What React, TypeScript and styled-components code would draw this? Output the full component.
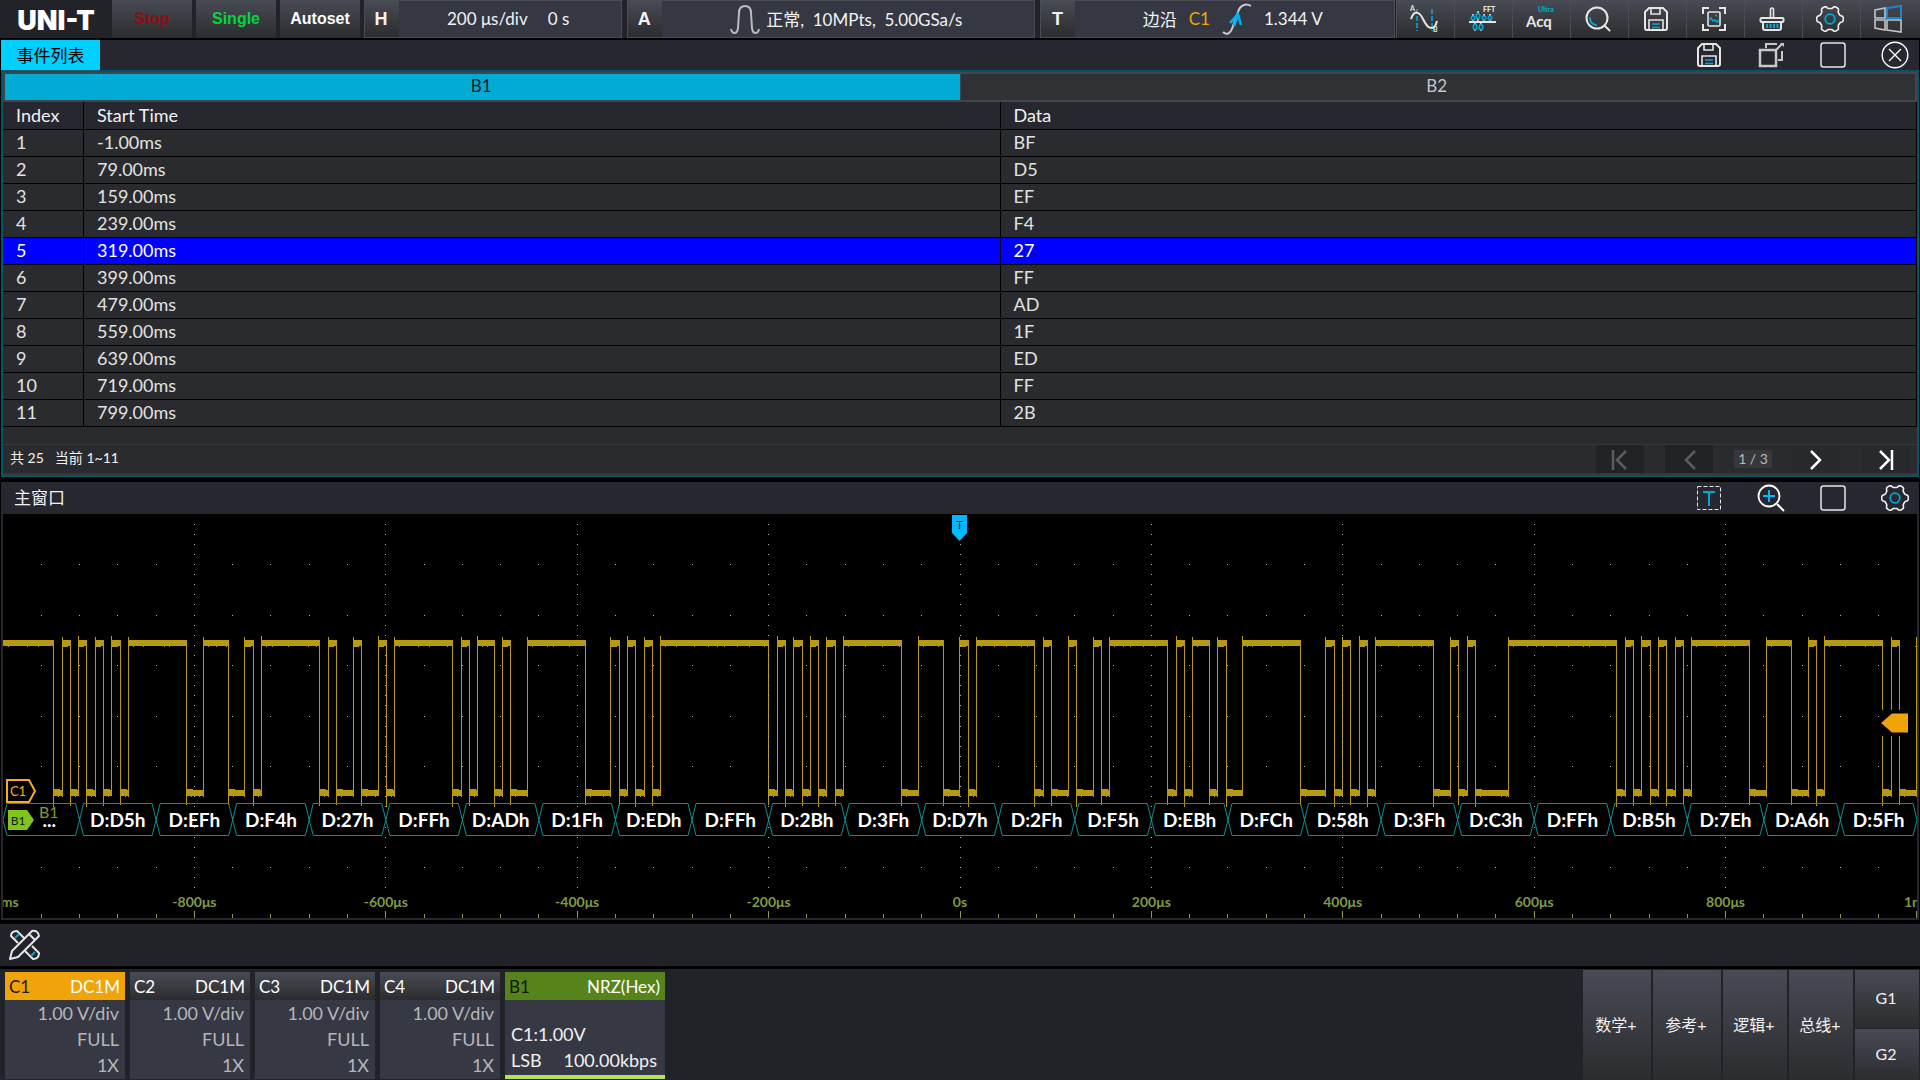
import React from 'react';
import styled, { createGlobalStyle } from 'styled-components';

const latin = 'Lato, "Noto Sans CJK SC", sans-serif';
const heavy = '"Liberation Sans", "Noto Sans CJK SC", sans-serif';
const bevel = 'linear-gradient(#484b54, #2b2c2e)';

const Global = createGlobalStyle`
  * { box-sizing: border-box; }
  body { margin: 0; background: #000; color: #f2f2f2; font-family: ${latin}; font-size: 17px; }
  button { font: inherit; color: inherit; border: 0; padding: 0; margin: 0; background: none; cursor: pointer; }
  svg { display: block; }
`;

const Screen = styled.div`
  display: flex;
  flex-direction: column;
  min-height: 100vh;
`;

/* ---------- top bar ---------- */

const TopBar = styled.header`
  display: flex;
  height: 38px;
  background: #222329;
`;

const Logo = styled.div`
  width: 112px;
  flex: none;
  display: flex;
  align-items: center;
  justify-content: center;
  padding-top: 3px;
  font: 900 27px Inter, sans-serif;
  color: #fff;
`;

const RunButton = styled.button<{ $color: string }>`
  width: 80px;
  flex: none;
  margin-right: 4px;
  background: ${bevel};
  color: ${(p) => p.$color};
  font: bold 16px ${heavy};
`;

const Group = styled.section<{ $grow: number }>`
  display: flex;
  flex: ${(p) => p.$grow} 1 0;
  margin-right: 5px;
  border: 1px solid #4a4c53;
  background: #353843;
`;

const GroupKey = styled.button`
  width: 34px;
  flex: none;
  padding-right: 2px;
  background: ${bevel};
  font: bold 18px ${heavy};
`;

const GroupInfo = styled.div<{ $gap: number }>`
  flex: 1;
  display: flex;
  align-items: center;
  justify-content: center;
  gap: ${(p) => p.$gap}px;
  padding: 0 4px 1px 0;
  font-size: 17px;
  white-space: pre;
`;

const Source = styled.span`
  color: #f0a40a;
`;

const Tools = styled.nav`
  display: flex;
  flex: none;
  margin-left: -4px;
  padding-right: 2px;
  background: ${bevel};
`;

const Tool = styled.button`
  width: 58px;
  height: 38px;
  display: flex;
  align-items: center;
  justify-content: center;
  padding-right: 4px;
  border-left: 1px solid #4a4c53;
`;

/* ---------- window frames ---------- */

const Window = styled.section<{ $gap: number }>`
  margin: ${(p) => p.$gap}px 1px 0;
  background: #26272f;
`;

const TitleBar = styled.div<{ $height: number }>`
  display: flex;
  justify-content: space-between;
  height: ${(p) => p.$height}px;
`;

const ActiveTitle = styled.h2`
  margin: 0;
  width: 99px;
  display: flex;
  align-items: center;
  justify-content: center;
  padding-bottom: 2px;
  background: #00d0ff;
  color: #000;
  font-size: 17px;
  font-weight: 400;
`;

const Title = styled.h2`
  margin: 0;
  padding: 0 0 3px 13px;
  display: flex;
  align-items: center;
  font-size: 17px;
  font-weight: 400;
`;

const TitleTools = styled.div`
  display: flex;
  gap: 12px;
`;

const TitleTool = styled.button`
  width: 50px;
  display: flex;
  align-items: center;
  justify-content: center;
  padding-left: 2px;
`;

/* ---------- event list ---------- */

const EventBody = styled.div`
  border: 2px solid #03566a;
  background: #2a2b2e;
`;

const Tabs = styled.div`
  display: flex;
  gap: 1px;
  border: 2px solid #43454b;
  background: #43454b;
`;

const Tab = styled.button<{ $on?: boolean }>`
  flex: 1;
  height: 26px;
  padding: 0 2px 3px 0;
  background: ${(p) => (p.$on ? '#02abd3' : '#303135')};
  color: ${(p) => (p.$on ? '#10161a' : '#c4c4c8')};
`;

const Table = styled.table`
  width: 100%;
  table-layout: fixed;
  border-collapse: separate;
  border-spacing: 0;
  font-size: 18px;
  line-height: 24px;
`;

const HeadCell = styled.th<{ $width?: number }>`
  width: ${(p) => (p.$width ? `${p.$width}px` : 'auto')};
  height: 28px;
  padding: 0 0 2px 13px;
  background: #26272f;
  border: solid #000;
  border-width: 0 1px 1px 0;
  font-weight: 400;
  text-align: left;
`;

const Cell = styled.td`
  height: 27px;
  padding: 0 0 2px 13px;
  border: solid #000;
  border-width: 0 1px 1px 0;
`;

const EventRow = styled.tr<{ $on: boolean }>`
  background: ${(p) => (p.$on ? '#0000ff' : '#2a2b2e')};
  color: ${(p) => (p.$on ? '#ffffff' : '#e2e2e2')};
`;

const Footer = styled.footer`
  display: flex;
  justify-content: space-between;
  align-items: center;
  height: 31px;
  margin-top: 17px;
  padding: 0 7px;
  border-top: 1px solid #36373b;
  border-bottom: 2px solid #36373b;
`;

const Count = styled.p`
  margin: 0;
  display: flex;
  gap: 11px;
  font-size: 14px;
  padding-bottom: 5px;
`;

const Pager = styled.nav`
  display: grid;
  grid-template-columns: 48px 48px 38px 48px 48px;
  gap: 21px;
  align-items: center;
`;

const PageButton = styled.button`
  height: 28px;
  display: flex;
  align-items: center;
  justify-content: center;
  padding-top: 2px;
  background: #28292c;
  color: #fff;
  &:disabled { background: #222327; color: #5c5d60; }
`;

const PageLabel = styled.span`
  height: 18px;
  background: #37383c;
  color: #b8b8b8;
  font-size: 14px;
  line-height: 18px;
  text-align: center;
  white-space: nowrap;
`;

/* ---------- scope ---------- */

const Plot = styled.div`
  position: relative;
  height: 406px;
  border: solid #26272f;
  border-width: 0 2px 2px;
  background: #000;
  overflow: hidden;
`;

const Layer = styled.svg`
  width: 100%;
  height: 404px;
`;

const BusRow = styled.div`
  position: absolute;
  left: 0;
  right: 0;
  top: 289px;
  height: 33px;
  display: grid;
  grid-template-columns: repeat(25, minmax(0, 1fr));
`;

const BusWord = styled.span<{ $inset?: number }>`
  padding-left: ${(p) => p.$inset ?? 0}px;
  text-align: center;
  color: #fff;
  font-size: 19px;
  font-weight: 700;
  line-height: 33px;
  white-space: nowrap;
`;

const BusName = styled.span`
  position: absolute;
  left: 36px;
  top: 288px;
  color: #7f9a35;
  font-size: 16px;
  line-height: 20px;
`;

const Axis = styled.div`
  position: absolute;
  left: -5%;
  right: -5%;
  top: 378px;
  display: flex;
`;

const AxisLabel = styled.span`
  flex: 1 1 0;
  text-align: center;
  color: #7f9a40;
  font-size: 14px;
  font-weight: 700;
  line-height: 20px;
`;

const TriggerTime = styled.svg`
  position: absolute;
  left: calc(50% - 8px);
  top: 1px;
`;

const TriggerLevel = styled.svg`
  position: absolute;
  right: 5px;
  top: 196px;
`;

const ChannelMark = styled.svg`
  position: absolute;
  left: 2px;
  top: 264px;
`;

const BusMark = styled.svg`
  position: absolute;
  left: 4px;
  top: 296px;
`;

/* ---------- bottom ---------- */

const Strip = styled.div`
  display: flex;
  align-items: center;
  height: 42px;
  margin-top: 4px;
  padding-left: 8px;
  background: #222329;
`;

const Dock = styled.footer`
  flex: 1;
  min-height: 111px;
  margin-top: 3px;
  padding: 3px 1px 0 5px;
  display: flex;
  justify-content: space-between;
  background: #222329;
`;

const Cards = styled.div`
  display: flex;
  gap: 5px;
`;

const Card = styled.section<{ $width: number; $accent?: string }>`
  width: ${(p) => p.$width}px;
  height: 107px;
  background: #363944;
  border-bottom: ${(p) => (p.$accent ? `4px solid ${p.$accent}` : '0')};
  font-size: 18px;
  line-height: 26px;
`;

const CardHead = styled.header<{ $bg: string; $key: string }>`
  display: flex;
  justify-content: space-between;
  height: 28px;
  padding: 0 5px 0 4px;
  font-size: 17px;
  line-height: 29px;
  background: ${(p) => p.$bg};
  color: #fff;
  & > :first-child { color: ${(p) => p.$key}; }
`;

const CardLines = styled.div`
  padding-right: 6px;
  color: #b5b6ba;
  text-align: right;
`;

const BusLines = styled.div`
  padding: 21px 8px 0 6px;
`;

const BusLine = styled.div`
  display: flex;
  justify-content: space-between;
`;

const Adders = styled.nav`
  display: grid;
  grid-template-columns: 68px 68px 64px 64px 64px;
  grid-template-rows: 58px 1fr;
  gap: 1px 2px;
  margin-top: -2px;
`;

const Adder = styled.button<{ $tall?: boolean }>`
  grid-row: ${(p) => (p.$tall ? '1 / 3' : 'auto')};
  padding: 0 2px 3px 0;
  background: ${bevel};
  font-size: 16px;
`;

/* ---------- icons ---------- */

const W = '#e6e6e6';
const B = '#00a8d8';

const CursorIcon = () => (
  <svg width="28" height="28" viewBox="0 0 28 28" fill="none" strokeWidth="2">
    <path d="M7 4v22M22 4v22" stroke={B} strokeDasharray="5 2" strokeWidth="1.6" />
    <path d="M1 14C4 5 9 6 13 14s6 9 9 9c3 0 4-3 5-7" stroke={W} />
    <text x="0" y="6" fontSize="7" fontWeight="700" fill={W}>A</text>
    <text x="23" y="27" fontSize="7" fontWeight="700" fill={W}>B</text>
  </svg>
);

const FftIcon = () => (
  <svg width="28" height="28" viewBox="0 0 28 28" fill="none" strokeWidth="1.5">
    <path d="M5 9v7M10 6v10M16 9v7M22 9v7M7 17v9M13 17v9" stroke={W} />
    <path d="M1 17h27" stroke={W} strokeWidth="2" />
    <g stroke={B} fill="#3a3c42">
      <circle cx="5" cy="13" r="1.8" /><ellipse cx="10" cy="11" rx="1.8" ry="2.6" />
      <circle cx="16" cy="13" r="1.8" /><circle cx="22" cy="13" r="1.8" />
      <ellipse cx="7" cy="22" rx="1.8" ry="2.6" /><ellipse cx="13" cy="22" rx="1.8" ry="2.6" />
    </g>
    <text x="15" y="7" fontSize="7" fontWeight="900" fill={W}>FFT</text>
  </svg>
);

const AcqIcon = () => (
  <svg width="30" height="30" viewBox="0 0 30 30">
    <text x="13" y="8" fontSize="7" fontWeight="900" fill={B}>Ultra</text>
    <text x="1" y="23" fontSize="15" fontWeight="700" fill={W}>Acq</text>
  </svg>
);

const SearchIcon = () => (
  <svg width="26" height="26" viewBox="0 0 26 26" fill="none" strokeWidth="2" strokeLinecap="round">
    <circle cx="12" cy="12" r="10.5" stroke={W} />
    <path d="M19.5 19.5l5 5" stroke={W} />
    <path d="M5 12a7 7 0 0 0 6 7" stroke={B} />
  </svg>
);

const SaveIcon = () => (
  <svg width="26" height="26" viewBox="0 0 26 26" fill="none" stroke={W} strokeWidth="2">
    <path d="M6 2h14l4 4v16a2 2 0 0 1-2 2H4a2 2 0 0 1-2-2V6z" strokeLinejoin="round" />
    <path d="M8 2v6h9V2M6 24V14h14v10" strokeWidth="1.6" />
    <path d="M9 18h8M9 21.500h8" stroke={B} strokeWidth="1.6" />
  </svg>
);

const CaptureIcon = () => (
  <svg width="26" height="26" viewBox="0 0 26 26" fill="none" stroke={W} strokeWidth="2">
    <path d="M2 8V2h6M18 2h6v6M24 18v6h-6M8 24H2v-6" />
    <rect x="7" y="6" width="12" height="14" rx="1" strokeWidth="1.6" />
    <path d="M8 14l2-2 2 3 2-1 2 2 2-2" stroke={B} strokeWidth="1.6" />
    <circle cx="15" cy="9.500" r="1" fill={B} stroke="none" />
  </svg>
);

const BrushIcon = () => (
  <svg width="26" height="26" viewBox="0 0 26 26" fill="none" stroke={W} strokeWidth="2">
    <path d="M11.500 12V3q1.500-2 3 0v9" strokeWidth="1.6" />
    <rect x="1.500" y="12" width="23" height="4" rx="1" />
    <path d="M4 16v6q0 2 2 2h14q2 0 2-2v-6" />
    <path d="M8 18v4M11.500 18v4M15 18v4M18.500 18v4" stroke={B} />
  </svg>
);

// Six rounded teeth, one pointing right, with a dip at the top and bottom.
const gearOutline = Array.from({ length: 120 }, (_, i) => {
  const a = (i / 120) * Math.PI * 2;
  const r = 11.9 + 1.5 * Math.tanh(2 * Math.cos(6 * a));
  return `${(14 + r * Math.cos(a)).toFixed(2)},${(14 + r * Math.sin(a)).toFixed(2)}`;
}).join(' ');

const GearIcon = () => (
  <svg width="28" height="28" viewBox="0 0 28 28" fill="none" strokeWidth="1.8" strokeLinejoin="round">
    <polygon points={gearOutline} stroke="#f0f0f0" strokeWidth="1.6" />
    <circle cx="14" cy="14" r="4.800" stroke={B} />
  </svg>
);

const WindowsIcon = () => (
  <svg width="28" height="28" viewBox="0 0 28 28" fill="none" stroke="#c4c4c4" strokeWidth="1.6">
    <path d="M1 5l10-2v10H1zM1 15h10v10L1 23zM13 15h14v12l-14-2z" />
    <path d="M13 3l14-2v12H13z" stroke="#1d86cf" strokeWidth="2" />
  </svg>
);

const DetachIcon = () => (
  <svg width="26" height="26" viewBox="0 0 26 26" fill="none" stroke="#c8c8c8">
    <rect x="2" y="8" width="16" height="16" strokeWidth="2.500" />
    <path d="M8 6V2h11M20 18h4V9M18 8l6-6" strokeWidth="2" />
    <path d="M22 1h4v4z" fill="#c8c8c8" stroke="none" />
  </svg>
);

const SquareIcon = () => (
  <svg width="26" height="26" viewBox="0 0 26 26" fill="none">
    <rect x="1" y="1" width="24" height="24" rx="2.500" stroke={W} strokeWidth="1.5" />
  </svg>
);

const CloseIcon = () => (
  <svg width="28" height="28" viewBox="0 0 28 28" fill="none" stroke="#fff" strokeWidth="1.4">
    <circle cx="14" cy="14" r="12.800" />
    <path d="M8 8l12 12M20 8L8 20" />
  </svg>
);

const TextBoxIcon = () => (
  <svg width="24" height="24" viewBox="0 0 24 24" fill="none">
    <rect x="0.500" y="0.500" width="23" height="23" stroke={W} strokeDasharray="4 2" />
    <path d="M6 6h12M12 6v14" stroke={B} strokeWidth="2" />
  </svg>
);

const ZoomInIcon = () => (
  <svg width="28" height="28" viewBox="0 0 28 28" fill="none" strokeWidth="1.8">
    <circle cx="12" cy="12" r="10.500" stroke="#fff" />
    <path d="M20 20l7 7" stroke="#fff" strokeWidth="2" />
    <path d="M6 12h12M12 6v12" stroke="#00b8ff" strokeWidth="2" />
  </svg>
);

const PulseIcon = () => (
  <svg width="30" height="32" viewBox="0 0 30 32" fill="none" stroke="#b8babf" strokeWidth="2">
    <path d="M1 26c1 5 6 6 7-1l1-15c0-6 3-7 6-7s6 1 6 7l1 15c1 7 6 6 7 1" />
  </svg>
);

const EdgeIcon = () => (
  <svg width="30" height="34" viewBox="0 0 30 34" fill="none" strokeWidth="2">
    <path d="M1 30c4 4 8 1 10-6l5-14c2-7 8-9 13-6" stroke="#c8cacf" />
    <path d="M8 21l8-9 3 11" stroke="#00b0f0" strokeWidth="2.500" />
    <path d="M12 24l4-11" stroke="#00b0f0" strokeWidth="2.500" />
  </svg>
);

const PenRulerIcon = () => (
  <svg width="34" height="32" viewBox="0 0 34 32" fill="none" strokeWidth="2" stroke={W} strokeLinejoin="round">
    <path d="M10 14L3 7Q3 2 9 2l8 8M24 17l7 7q0 6-6 6l-8-8" />
    <path d="M24 2q6-1 7 5L10 28l-8 2 2-8zM21 5l6 6" />
    <path d="M7 9l4-4M23 27l4-4" stroke={B} />
  </svg>
);

const Chevron = ({ back, bar }: { back?: boolean; bar?: boolean }) => (
  <svg width="18" height="20" viewBox="0 0 18 20" fill="none" stroke="currentColor" strokeWidth="2.500">
    <path d={back ? 'M15 1L6 10l9 9' : 'M3 1l9 9-9 9'} />
    {bar && <path d={back ? 'M2 0v20' : 'M15 0v20'} />}
  </svg>
);

/* ---------- data ---------- */

const events: [string, string][] = [
  ['-1.00ms', 'BF'], ['79.00ms', 'D5'], ['159.00ms', 'EF'], ['239.00ms', 'F4'],
  ['319.00ms', '27'], ['399.00ms', 'FF'], ['479.00ms', 'AD'], ['559.00ms', '1F'],
  ['639.00ms', 'ED'], ['719.00ms', 'FF'], ['799.00ms', '2B'],
];

const words = [
  'D5', 'EF', 'F4', '27', 'FF', 'AD', '1F', 'ED', 'FF', '2B', '3F', 'D7',
  '2F', 'F5', 'EB', 'FC', '58', '3F', 'C3', 'FF', 'B5', '7E', 'A6', '5F',
];

const ticks = ['-1ms', '-800μs', '-600μs', '-400μs', '-200μs', '0s', '200μs', '400μs', '600μs', '800μs', '1ms'];

const tools: [string, () => React.JSX.Element][] = [
  ['光标', CursorIcon], ['FFT', FftIcon], ['Ultra Acq', AcqIcon], ['搜索', SearchIcon], ['保存', SaveIcon],
  ['截图', CaptureIcon], ['清除', BrushIcon], ['设置', GearIcon], ['系统', WindowsIcon],
];

// Level changes of C1 in plot units; the trace starts high, so even entries fall.
const edges = [
  50, 59, 67, 75, 83, 92, 100, 108, 117, 125, 183, 200, 225, 241, 250, 258, 316, 325, 333, 350, 358, 375,
  383, 391, 449, 458, 466, 474, 491, 499, 507, 524, 582, 607, 616, 624, 632, 641, 649, 657, 765, 774, 782,
  790, 799, 807, 815, 823, 832, 840, 898, 915, 940, 956, 965, 973, 1031, 1040, 1048, 1065, 1073, 1090, 1098,
  1106, 1164, 1173, 1181, 1189, 1206, 1214, 1223, 1239, 1297, 1322, 1331, 1339, 1347, 1356, 1364, 1372, 1430,
  1447, 1455, 1464, 1472, 1505, 1613, 1622, 1630, 1638, 1647, 1655, 1663, 1672, 1680, 1688, 1746, 1763, 1788,
  1805, 1813, 1821, 1879, 1888, 1896, 1913,
];

const WIDTH = 1914;

const wavePath = () => {
  let d = '';
  const bar = (x: number, y: number, w: number, h: number) => {
    d += `M${x} ${y}h${w}v${h}h${-w}z`;
  };
  const stops = [0, ...edges, WIDTH];
  for (let i = 0; i + 1 < stops.length; i++) {
    const x = stops[i];
    const w = stops[i + 1] - x;
    const high = i % 2 === 0;
    bar(x, high ? 126 : 276, w, 6);
    if (high && w < 12) bar(x, 132, w - 2, 1);
    if (!high) bar(x, 275, Math.min(w, 7), 1);
    for (let n = 5; n < w; n += 5 + ((x * 7 + n * 13) % 17)) bar(x + n, high ? 132 : 282, 1, 1);
    if (i > 0) {
      const jitter = x % 3;
      if (high) bar(x, 123 - (jitter === 0 ? 1 : 0), 1, 160);
      else bar(x, 126, 1, 165 + jitter);
    }
  }
  return d;
};

const busPath = () => {
  const step = WIDTH / 25;
  let d = '';
  for (let i = 0; i < 25; i++) {
    const a = i * step;
    const b = a + step;
    d += `M${a} 306L${a + 4} 289.500H${b - 4}L${b} 306L${b - 4} 321.500H${a + 4}Z`;
  }
  return d;
};

const dotPath = () => {
  let d = '';
  const dot = (x: number, y: number) => {
    d += `M${Math.floor(x)} ${Math.floor(y)}h1v1h-1z`;
  };
  for (let row = 1; row < 8; row++) {
    for (let col = 1; col < 50; col++) dot((col * WIDTH) / 50, row * 50.5);
  }
  for (let col = 1; col < 10; col++) {
    for (let n = 1; n < 38; n++) dot((col * WIDTH) / 10, n * 10.1);
  }
  return d;
};

const tickPath = () => {
  let d = '';
  for (let col = 1; col <= 50; col++) {
    const h = col % 5 === 0 ? 7 : 4;
    d += `M${Math.min(WIDTH - 1, Math.floor((col * WIDTH) / 50))} ${404 - h}h1v${h}h-1z`;
  }
  return d;
};

const channels = [
  { name: 'C1', bg: '#f0a40a', key: '#1a1a1a' },
  { name: 'C2', bg: bevel, key: '#fff' },
  { name: 'C3', bg: bevel, key: '#fff' },
  { name: 'C4', bg: bevel, key: '#fff' },
];

export default function App() {
  return (
    <Screen>
      <Global />
      <TopBar>
        <Logo>UNI-T</Logo>
        <RunButton $color="#8f0c10">Stop</RunButton>
        <RunButton $color="#00d83a">Single</RunButton>
        <RunButton $color="#ffffff">Autoset</RunButton>
        <Group $grow={258}>
          <GroupKey>H</GroupKey>
          <GroupInfo $gap={20}><span>200 μs/div</span><span>0 s</span></GroupInfo>
        </Group>
        <Group $grow={409}>
          <GroupKey>A</GroupKey>
          <GroupInfo $gap={6}><PulseIcon /><span>正常,  10MPts,  5.00GSa/s</span></GroupInfo>
        </Group>
        <Group $grow={355}>
          <GroupKey>T</GroupKey>
          <GroupInfo $gap={12}><span>边沿</span><Source>C1</Source><EdgeIcon /><span>1.344 V</span></GroupInfo>
        </Group>
        <Tools>
          {tools.map(([label, Icon]) => (
            <Tool key={label} aria-label={label}><Icon /></Tool>
          ))}
        </Tools>
      </TopBar>

      <Window $gap={2}>
        <TitleBar $height={30}>
          <ActiveTitle>事件列表</ActiveTitle>
          <TitleTools>
            <TitleTool aria-label="保存"><SaveIcon /></TitleTool>
            <TitleTool aria-label="浮动"><DetachIcon /></TitleTool>
            <TitleTool aria-label="最大化"><SquareIcon /></TitleTool>
            <TitleTool aria-label="关闭"><CloseIcon /></TitleTool>
          </TitleTools>
        </TitleBar>
        <EventBody>
          <Tabs>
            <Tab $on>B1</Tab>
            <Tab>B2</Tab>
          </Tabs>
          <Table>
            <thead>
              <tr>
                <HeadCell $width={81}>Index</HeadCell>
                <HeadCell>Start Time</HeadCell>
                <HeadCell>Data</HeadCell>
              </tr>
            </thead>
            <tbody>
              {events.map(([time, data], i) => (
                <EventRow key={time} $on={i === 4}>
                  <Cell>{i + 1}</Cell>
                  <Cell>{time}</Cell>
                  <Cell>{data}</Cell>
                </EventRow>
              ))}
            </tbody>
          </Table>
          <Footer>
            <Count><span>共 25</span><span>当前 1~11</span></Count>
            <Pager>
              <PageButton disabled aria-label="首页"><Chevron back bar /></PageButton>
              <PageButton disabled aria-label="上一页"><Chevron back /></PageButton>
              <PageLabel>1 / 3</PageLabel>
              <PageButton aria-label="下一页"><Chevron /></PageButton>
              <PageButton aria-label="末页"><Chevron bar /></PageButton>
            </Pager>
          </Footer>
        </EventBody>
      </Window>

      <Window $gap={5}>
        <TitleBar $height={32}>
          <Title>主窗口</Title>
          <TitleTools>
            <TitleTool aria-label="文本"><TextBoxIcon /></TitleTool>
            <TitleTool aria-label="放大"><ZoomInIcon /></TitleTool>
            <TitleTool aria-label="最大化"><SquareIcon /></TitleTool>
            <TitleTool aria-label="设置"><GearIcon /></TitleTool>
          </TitleTools>
        </TitleBar>
        <Plot>
          <Layer viewBox={`0 0 ${WIDTH} 404`} preserveAspectRatio="none">
            <g shapeRendering="crispEdges">
              <path d={wavePath()} fill="#b89a10" />
              <path d={dotPath()} fill="#b4b4a8" />
              <path d={tickPath()} fill="#8a9a3c" />
            </g>
            <path d={busPath()} fill="none" stroke="#0b8f90" strokeWidth="1" />
          </Layer>
          <BusRow>
            <BusWord $inset={16}>...</BusWord>
            {words.map((word, i) => <BusWord key={i}>{`D:${word}h`}</BusWord>)}
          </BusRow>
          <BusName>B1</BusName>
          <Axis>{ticks.map((t) => <AxisLabel key={t}>{t}</AxisLabel>)}</Axis>
          <TriggerTime width="15" height="26" viewBox="0 0 15 26">
            <path d="M0 0h15v18l-7.500 8L0 18z" fill="#00b8ff" />
            <text x="7.500" y="14" fontSize="12" textAnchor="middle" fill="#06222c">T</text>
          </TriggerTime>
          <TriggerLevel width="32" height="26" viewBox="0 0 32 26">
            <path d="M0 0h32v26H0z" fill="#000" />
            <path d="M1 13l11-9.500h16v19H12z" fill="#f0a40a" />
          </TriggerLevel>
          <ChannelMark width="32" height="26" viewBox="0 0 32 26">
            <path d="M2 2h22l6 11-6 11H2z" fill="#000" stroke="#f5ac20" strokeWidth="2" />
            <text x="13" y="18" fontSize="13" textAnchor="middle" fill="#f5ac20">C1</text>
          </ChannelMark>
          <BusMark width="28" height="20" viewBox="0 0 28 20">
            <path d="M1 0h19l7 10-7 10H1z" fill="#80c41c" />
            <text x="11" y="15" fontSize="12" textAnchor="middle" fill="#10200a">B1</text>
          </BusMark>
        </Plot>
      </Window>

      <Strip>
        <button aria-label="测量"><PenRulerIcon /></button>
      </Strip>

      <Dock>
        <Cards>
          {channels.map((c) => (
            <Card key={c.name} $width={120}>
              <CardHead $bg={c.bg} $key={c.key}><span>{c.name}</span><span>DC1M</span></CardHead>
              <CardLines>
                <div>1.00 V/div</div>
                <div>FULL</div>
                <div>1X</div>
              </CardLines>
            </Card>
          ))}
          <Card $width={160} $accent="#b0e455">
            <CardHead $bg="#57841a" $key="#10160a"><span>B1</span><span>NRZ(Hex)</span></CardHead>
            <BusLines>
              <BusLine>C1:1.00V</BusLine>
              <BusLine><span>LSB</span><span>100.00kbps</span></BusLine>
            </BusLines>
          </Card>
        </Cards>
        <Adders>
          <Adder $tall>数学+</Adder>
          <Adder $tall>参考+</Adder>
          <Adder $tall>逻辑+</Adder>
          <Adder $tall>总线+</Adder>
          <Adder>G1</Adder>
          <Adder>G2</Adder>
        </Adders>
      </Dock>
    </Screen>
  );
}
